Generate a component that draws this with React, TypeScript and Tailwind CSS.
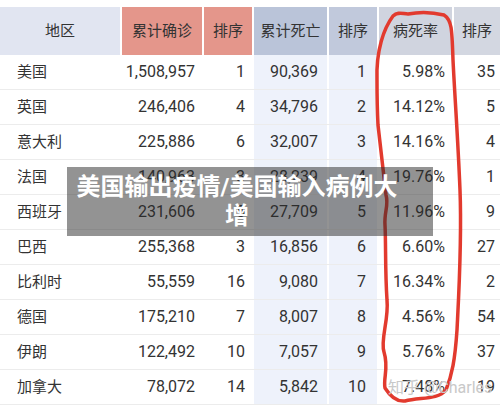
const rows: [string, string, string, string, string, string, string][] = [
  ["美国", "1,508,957", "1", "90,369", "1", "5.98%", "35"],
  ["英国", "246,406", "4", "34,796", "2", "14.12%", "5"],
  ["意大利", "225,886", "6", "32,007", "3", "14.16%", "4"],
  ["法国", "140,963", "3", "28,239", "4", "19.76%", "1"],
  ["西班牙", "231,606", "5", "27,709", "5", "11.96%", "9"],
  ["巴西", "255,368", "3", "16,856", "6", "6.60%", "27"],
  ["比利时", "55,559", "16", "9,080", "7", "16.34%", "2"],
  ["德国", "175,210", "7", "8,007", "8", "4.56%", "54"],
  ["伊朗", "122,492", "10", "7,057", "9", "5.76%", "37"],
  ["加拿大", "78,072", "14", "5,842", "10", "7.48%", "19"],
];

const headers = [
  { label: "地区", cls: "w-[122px] bg-[#e1e5f1]" },
  { label: "累计确诊", cls: "w-[82px] bg-[#e4968b]" },
  { label: "排序", cls: "w-[50px] bg-[#e4968b]" },
  { label: "累计死亡", cls: "w-[75px] bg-[#bac4d9]" },
  { label: "排序", cls: "w-[50px] bg-[#c1c9dc]" },
  { label: "病死率", cls: "w-[75px] bg-[#d0d4df]" },
  { label: "排序", cls: "w-[46px] bg-[#d3d7e1]" },
];

const widths = ["w-[122px]", "w-[82px]", "w-[50px]", "w-[75px]", "w-[50px]", "w-[75px]", "w-[46px]"];

export default function App() {
  return (
    <div
      className="relative w-[500px] h-[405px] overflow-hidden bg-white text-[#333]"
      style={{ fontFamily: 'Roboto, "Noto Sans CJK SC", sans-serif' }}
    >
      <div className="pt-[7px]">
        <div className="flex h-[48px]">
          {headers.map((h, i) => (
            <div
              key={i}
              className={`${h.cls} flex items-center justify-center text-[15px] ${i < 6 ? "border-r-2 border-white" : ""}`}
            >
              {h.label}
            </div>
          ))}
        </div>
        {rows.map((r, ri) => (
          <div key={ri} className="flex h-[35px] border-b border-[#ececec]">
            {r.map((cell, ci) => (
              <div
                key={ci}
                className={`${widths[ci]} flex items-center ${ci === 0 ? "pl-[17px] text-[15px]" : "justify-end text-[16px]"} ${
                  ci === 6 ? "pr-[5px]" : ci === 4 ? "pr-[11px]" : ci === 0 ? "" : "pr-[9px]"
                } ${ci === 3 || ci === 4 ? "bg-[#eef2fb] border-r-2 border-white" : ""}`}
              >
                {cell}
              </div>
            ))}
          </div>
        ))}
      </div>

      <svg className="absolute left-0 top-0 pointer-events-none" width="500" height="405" viewBox="0 0 500 405">
        <path
          d="M377 80 C376 50 384 28 393 16 C398 11 403 14 408 14 C418 12 432 12 444 15 C452 20 452 30 453 60 C455 100 458 140 460 190 C462 240 459 290 457 330 C455 360 452 375 446 390 C438 400 420 397 405 401 C396 402 390 396 385 388 C383 378 389 368 384 352 C380 340 389 320 387 300 C385 270 386 245 385 225 C384 212 389 205 386 195 C383 170 381 150 378 125 C377 105 377 95 377 80 Z"
          fill="none"
          stroke="#e23a2e"
          strokeWidth="3.5"
          strokeLinejoin="round"
        />
      </svg>

      <div className="absolute left-[388px] top-[376px] text-[16px] text-[#c9c9c9] whitespace-nowrap">
        知乎 @Charles
      </div>

      <div className="absolute left-[67px] top-[167px] w-[366px] h-[69px] bg-[rgba(40,40,40,0.5)] pl-[8px] pr-[34px] flex items-center justify-center">
        <div className="text-center text-white font-bold text-[24px] leading-[29px]">
          美国输出疫情/美国输入病例大增
        </div>
      </div>
    </div>
  );
}
